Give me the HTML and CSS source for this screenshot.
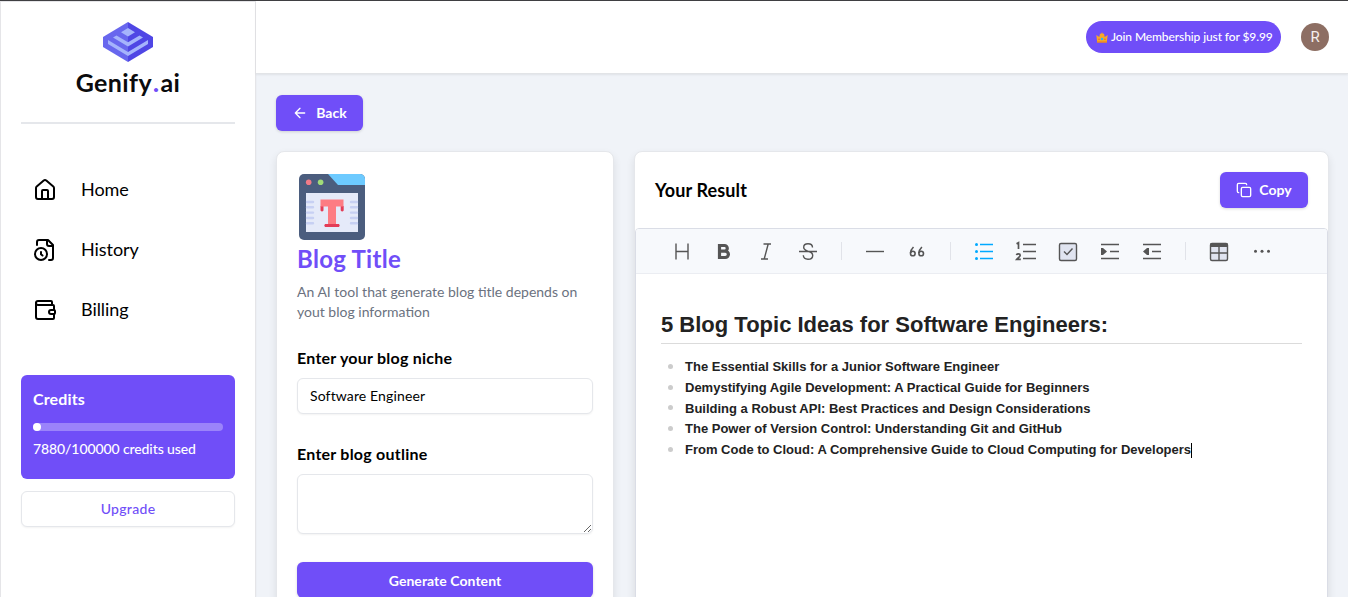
FILE: index.html
```html
<!DOCTYPE html>
<html lang="en">
<head>
<meta charset="utf-8">
<title>Genify.ai</title>
<link rel="stylesheet" href="styles.css">
</head>
<body>
<div class="app">
  <aside class="sidebar">
    <div class="brand">
      <svg width="50" height="40" viewBox="0 0 50 40">
        <path fill="#6867ee" d="M25 0 0 15v10l25 15z"/>
        <path fill="#4f46e5" d="M25 0l25 15v10L25 40z"/>
        <path fill="#a5b4fc" d="M25 6l7 4.3-7 4.3-7-4.3zM10 15.500l3.500-2L25 20.300l11.500-6.800 3.500 2-15 9zM5 18l20 12 20-12v4L25 34 5 22z"/>
      </svg>
      <div class="brand-name">Genify<span class="dot">.</span>ai</div>
    </div>
    <hr class="rule">
    <nav class="nav">
      <a class="nav-item"><svg class="icon" width="24" height="24" viewBox="0 0 24 24"><path d="M15 21v-8a1 1 0 0 0-1-1h-4a1 1 0 0 0-1 1v8"/><path d="M3 10a2 2 0 0 1 .709-1.528l7-5.999a2 2 0 0 1 2.582 0l7 5.999A2 2 0 0 1 21 10v9a2 2 0 0 1-2 2H5a2 2 0 0 1-2-2z"/></svg><span>Home</span></a>
      <a class="nav-item"><svg class="icon" width="24" height="24" viewBox="0 0 24 24"><path d="M16 22h2a2 2 0 0 0 2-2V7l-5-5H6a2 2 0 0 0-2 2v3"/><path d="M14 2v4a2 2 0 0 0 2 2h4"/><circle cx="8" cy="16" r="6"/><path d="M9.500 17.500 8 16.250V14"/></svg><span>History</span></a>
      <a class="nav-item"><svg class="icon" width="24" height="24" viewBox="0 0 24 24"><path d="M19 7V4a1 1 0 0 0-1-1H5a2 2 0 0 0 0 4h15a1 1 0 0 1 1 1v4h-3a2 2 0 0 0 0 4h3a1 1 0 0 0 1-1v-2a1 1 0 0 0-1-1"/><path d="M3 5v14a2 2 0 0 0 2 2h15a1 1 0 0 0 1-1v-4"/></svg><span>Billing</span></a>
    </nav>
    <section class="credits">
      <h2 class="credits-title">Credits</h2>
      <div class="meter"><div class="meter-fill"></div></div>
      <p class="credits-used">7880/100000 credits used</p>
    </section>
    <button class="upgrade">Upgrade</button>
  </aside>
  <div class="main">
    <header class="topbar">
      <div class="join">
        <svg class="crown" width="12" height="11" viewBox="0 0 12 11"><path fill="#f9a825" d="M1 8.500.3 3l3 2L4 1.500l1 .5L6 .3 7 2l1-.5L8.700 5l3-2L11 8.500v2H1z"/><path fill="#e67e22" d="M1 9.500h10v1H1z"/><circle cx="6" cy="7" r="1.300" fill="#29b6f6"/><circle cx="3" cy="7.300" r=".7" fill="#e5533d"/><circle cx="9" cy="7.300" r=".7" fill="#e5533d"/></svg>
        <span class="join-text">Join Membership just for $9.99</span>
      </div>
      <div class="avatar">R</div>
    </header>
    <main class="content">
      <button class="button back"><svg class="icon thin" width="16" height="16" viewBox="0 0 24 24"><path d="m12 19-7-7 7-7M19 12H5"/></svg><span class="lift">Back</span></button>
      <div class="columns">
        <form class="card form">
          <svg class="tool-image" width="70" height="70" viewBox="0 0 70 70">
            <rect x="2" y="2" width="66" height="66" rx="5" fill="#4b5d7e"/>
            <path fill="#6dcaff" d="M31 2h32a5 5 0 0 1 5 5v6H41z"/>
            <circle cx="11.700" cy="10.200" r="2.800" fill="#f17b88"/><circle cx="23.600" cy="10.200" r="2.800" fill="#a1dc79"/>
            <path fill="#e5eaf9" d="M9 21h52v39H9z"/>
            <path stroke="#c7d0f3" stroke-width="2.400" stroke-linecap="round" d="M10 30h6M10 35.300h6M10 40.600h6M10 46h6M10 51.300h6M54 30h6M54 35.300h6M54 40.600h6M54 46h6M54 51.300h6"/>
            <path fill="#e33c57" d="M23.500 34h3v4.500q-1.500 2-3 0zM43.700 34h3v4.500q-1.500 2-3 0zM28 52h14q1.500 1.500 0 3H28q-1.500-1.500 0-3z"/>
            <path fill="#fd7c83" d="M23.500 27.500h23v7h-7.500V52h-8V34.500h-7.500z"/>
          </svg>
          <h1 class="tool-title">Blog Title</h1>
          <p class="tool-text">An AI tool that generate blog title depends on<br>yout blog information</p>
          <label class="label niche">Enter your blog niche</label>
          <input class="field" value="Software Engineer">
          <label class="label outline">Enter blog outline</label>
          <textarea class="field area"></textarea>
          <button type="button" class="button generate">Generate Content</button>
        </form>
        <section class="card result">
          <div class="result-head">
            <h2 class="result-title">Your Result</h2>
            <button class="button copy"><svg class="icon thin" width="16" height="16" viewBox="0 0 24 24"><rect x="8" y="8" width="14" height="14" rx="2"/><path d="M4 16c-1.100 0-2-.9-2-2V4c0-1.100.9-2 2-2h10c1.100 0 2 .9 2 2"/></svg><span class="lift">Copy</span></button>
          </div>
          <div class="editor">
            <div class="toolbar">
              <svg class="tool heading" viewBox="0 0 32 32"><path d="M10 8.500v16M22 8.500v16M10 16.500h12"/></svg>
              <svg class="tool bold" viewBox="0 0 32 32"><path d="M11.500 10.500h5a2.800 2.800 0 0 1 0 5.600h-5zM11.500 16.100h5.700a3.200 3.200 0 0 1 0 6.400h-5.700z"/></svg>
              <svg class="tool" viewBox="0 0 32 32"><path d="M13.500 9h7.500M11 24h7M18.200 9l-4 15"/></svg>
              <svg class="tool" viewBox="0 0 32 32"><path d="M7 16.500h18M20.500 12.500c0-2.300-1.700-3.700-4.500-3.700s-4.300 1.400-4.300 3.500c0 3 3.300 3.500 5 4.200 2.500.7 4 1.700 4 3.900 0 2.500-2 3.800-4.700 3.800-3 0-4.500-1.400-4.700-3.900"/></svg>
              <i class="divider"></i>
              <svg class="tool" viewBox="0 0 32 32"><path d="M7 16.500h18"/></svg>
              <svg class="tool quote" viewBox="0 0 32 32"><circle cx="11.800" cy="18.500" r="2.300"/><path d="M9.500 18c0-3 1.500-4.500 3-6"/><circle cx="20.200" cy="18.500" r="2.300"/><path d="M17.900 18c0-3 1.500-4.500 3-6"/></svg>
              <i class="divider"></i>
              <svg class="tool active" viewBox="0 0 32 32"><path d="M12 9.500h13M12 16.500h13M12 23.500h13"/><g class="solid"><circle cx="8.500" cy="9.500" r="1.500"/><circle cx="8.500" cy="16.500" r="1.500"/><circle cx="8.500" cy="23.500" r="1.500"/></g></svg>
              <svg class="tool" viewBox="0 0 32 32"><path d="M13 9.500h13M13 16.500h13M13 23.500h13"/><path class="digits" d="M6.500 8.700 8.500 7.700v6.300M6.500 20.200c.3-1.800 3.700-1.800 3.700 0 0 1.300-2 2.500-3.400 4.100h4"/></svg>
              <svg class="tool" viewBox="0 0 32 32"><rect class="tint" x="7.500" y="8.500" width="17" height="17" rx="1.500"/><path d="m12 16.500 3 3 5.500-6"/></svg>
              <svg class="tool" viewBox="0 0 32 32"><path d="M7 9.500h18M16 16.500h9M7 23.500h18"/><path class="solid" d="M7 13h2l4 3.500L9 20H7z"/></svg>
              <svg class="tool" viewBox="0 0 32 32"><path d="M7 9.500h18M16 16.500h9M7 23.500h18"/><path class="solid" d="M13 13h-2l-4 3.500 4 3.500h2z"/></svg>
              <i class="divider"></i>
              <svg class="tool" viewBox="0 0 32 32"><rect class="tint" x="7.500" y="8.500" width="17" height="17" rx="1.500"/><path d="M7.500 18h17M16 10v15"/><path class="solid" d="M7 11v-1q0-2 2-2h14q2 0 2 2v2H7z"/></svg>
              <svg class="tool more" viewBox="0 0 32 32"><g class="solid"><circle cx="10.500" cy="16.300" r="1.500"/><circle cx="17" cy="16.300" r="1.500"/><circle cx="23.500" cy="16.300" r="1.500"/></g></svg>
            </div>
            <article class="document">
              <h2 class="doc-title">5 Blog Topic Ideas for Software Engineers:</h2>
              <ul class="doc-list">
                <li>The Essential Skills for a Junior Software Engineer</li>
                <li>Demystifying Agile Development: A Practical Guide for Beginners</li>
                <li>Building a Robust API: Best Practices and Design Considerations</li>
                <li>The Power of Version Control: Understanding Git and GitHub</li>
                <li>From Code to Cloud: A Comprehensive Guide to Cloud Computing for Developers<i class="caret"></i></li>
              </ul>
            </article>
          </div>
        </section>
      </div>
    </main>
  </div>
</div>
</body>
</html>
```
FILE: styles.css
```css
* { box-sizing: border-box; margin: 0; padding: 0; }
body { height: 597px; overflow: hidden; border-top: 1px solid #3f3f42; background: #f0f3f8; color: #000; font-family: Lato, sans-serif; }
button, input, textarea { font: inherit; }
.app { display: flex; height: 596px; overflow: hidden; }
.icon { flex: none; fill: none; stroke: currentColor; stroke-width: 2; stroke-linecap: round; stroke-linejoin: round; }
.lift { padding-bottom: 2px; }

.sidebar { width: 256px; flex: none; padding: 21px 20px; background: #fff; border: 1px solid #e5e5e8; border-width: 1px 1px 0; box-shadow: 0 1px 2px rgba(0,0,0,.05); }
.brand { display: flex; flex-direction: column; align-items: center; height: 99px; margin-top: -1px; }
.brand-name { margin-top: 4px; font-size: 25px; line-height: 32px; font-weight: 700; color: #0b0b0d; letter-spacing: .4px; }
.dot { margin: 0 1px; color: #704ef8; font-weight: 900; }
.rule { height: 2px; border: 0; background: #e5e7eb; margin-top: 1px; }
.nav { padding-top: 36px; display: grid; grid-auto-rows: 60px; }
.nav-item { display: flex; align-items: center; gap: 24px; padding-left: 12px; font-size: 18px; letter-spacing: -.05px; }
.nav-item span { padding-bottom: 2px; }
.credits { height: 104px; margin-top: 35px; padding: 12px; border-radius: 6px; background: #704ef8; color: #fff; }
.credits-title { font-size: 16px; line-height: 24px; font-weight: 700; letter-spacing: .15px; }
.meter { height: 8px; margin: 12px 0 8px; border-radius: 4px; background: #9b83fa; }
.meter-fill { width: 8px; height: 8px; border-radius: 50%; background: #fff; }
.credits-used { font-size: 14px; line-height: 20px; font-weight: 500; letter-spacing: -.1px; }
.upgrade { display: block; width: 100%; height: 36px; margin-top: 12px; padding-bottom: 2px; border: 1px solid #e5e7eb; border-radius: 6px; background: #fff; box-shadow: 0 1px 2px rgba(0,0,0,.05); color: #704ef8; font-size: 14px; font-weight: 500; letter-spacing: .3px; }

.main { flex: 1; min-width: 0; }
.topbar { height: 73px; display: flex; align-items: center; justify-content: flex-end; gap: 20px; padding-right: 19px; background: #fff; border-bottom: 1px solid #e2e4e7; box-shadow: 0 1px 2px rgba(0,0,0,.07); }
.join { display: flex; align-items: center; gap: 3px; width: 195px; height: 32px; padding-left: 10px; border-radius: 16px; background: #704ef8; color: #fff; font-size: 12px; font-weight: 500; letter-spacing: -.1px; white-space: nowrap; }
.join-text { padding-bottom: 1px; }
.avatar { width: 28px; height: 28px; border-radius: 50%; background: #8d6e63; color: #f5efed; font: 15px/28px Roboto, sans-serif; text-align: center; }
.content { padding: 21px 19px 0 20px; }
.button { display: flex; align-items: center; justify-content: center; height: 36px; border: 0; border-radius: 6px; background: #704ef8; box-shadow: 0 1px 3px rgba(0,0,0,.15); color: #fff; font-size: 14px; font-weight: 700; }
.back { width: 87px; gap: 8px; }
.columns { display: grid; grid-template-columns: 338px 695px; gap: 20px; margin-top: 20px; }
.card { min-width: 0; height: 700px; border: 1px solid #e5e7eb; border-radius: 8px; background: #fff; box-shadow: 0 4px 8px rgba(0,0,0,.09); }
.form { padding: 20px; display: flex; flex-direction: column; }
.tool-image { flex: none; }
.tool-title { margin-top: 1px; font-size: 24px; line-height: 32px; font-weight: 700; letter-spacing: .3px; color: #704ef8; }
.tool-text { margin-top: 7px; font-size: 14px; line-height: 20px; color: #6b7280; white-space: nowrap; }
.label { font-size: 16px; line-height: 24px; font-weight: 700; letter-spacing: .24px; }
.niche { margin-top: 24px; }
.outline { margin-top: 28px; }
.field { width: 100%; height: 36px; margin-top: 8px; padding: 0 12px 2px; border: 1px solid #e5e7eb; border-radius: 6px; background: #fff; box-shadow: 0 1px 2px rgba(0,0,0,.05); color: #000; font-size: 14px; letter-spacing: .13px; }
.area { height: 60px; flex: none; resize: vertical; }
.generate { flex: none; margin-top: 28px; letter-spacing: .05px; }
.result-head { display: flex; align-items: center; justify-content: space-between; height: 76px; padding: 0 20px; }
.result-title { font-size: 18px; font-weight: 700; letter-spacing: .12px; }
.copy { width: 88px; gap: 7px; }
.editor { height: 622px; border: 1px solid #dadde6; border-radius: 4px; font-family: "Liberation Sans", Arial, sans-serif; }
.toolbar { display: flex; align-items: center; height: 45px; padding: 0 25px; border-bottom: 1px solid #ebedf2; border-radius: 3px 3px 0 0; background: #f7f9fc; }
.tool { width: 32px; height: 32px; margin: 0 5px; flex: none; fill: none; stroke: #555; stroke-width: 1.4; color: #555; }
.bold { stroke-width: 3.2; }
.quote { stroke-width: 1.6; }
.digits { stroke-width: 1.7; }
.active { stroke: #00a9ff; color: #00a9ff; }
.solid { fill: currentColor; stroke: none; }
.tint { fill: #e0e4f0; }
.divider { width: 1px; height: 18px; margin: 0 12px; background: #e1e3e9; flex: none; }
.document { padding: 35px 25px; color: #222; }
.doc-title { height: 35px; border-bottom: 1px solid #dbdbdb; font-size: 22px; line-height: 32px; font-weight: 700; white-space: nowrap; }
.doc-list { list-style: none; margin-top: 13px; font-size: 13px; line-height: 20.8px; font-weight: 700; white-space: nowrap; }
.doc-list li { display: flex; align-items: center; }
.doc-list li::before { content: ""; width: 5px; height: 5px; margin: 0 12px 2px 7px; border-radius: 50%; background: #ccc; }
.caret { width: 1px; height: 15px; background: #000; }
```
